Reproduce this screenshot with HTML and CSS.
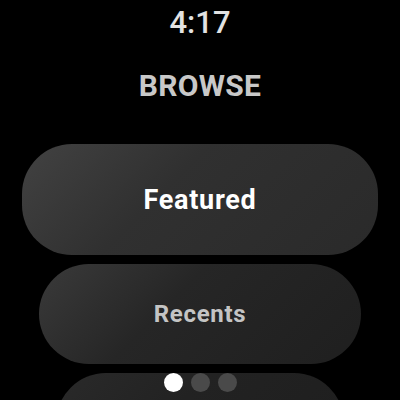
FILE: index.html
```html
<!DOCTYPE html>
<html lang="en">
<head>
    <meta charset="UTF-8">
    <title>Browse</title>
    <meta name="viewport" content="width=device-width, initial-scale=1.0">
    <link rel="stylesheet" href="styles.css">
</head>
<body>
<div class="screen">
    <div class="time">4:17</div>
    <h1 class="title">BROWSE</h1>

    <div class="list">
        <button class="chip chip-1">Featured</button>
        <button class="chip chip-2">Recents</button>
        <!-- next item, scrolled below the edge -->
        <button class="chip chip-3"></button>
    </div>

    <!-- page indicator -->
    <div class="dots">
        <span class="dot active"></span>
        <span class="dot"></span>
        <span class="dot"></span>
    </div>
</div>
</body>
</html>
```

FILE: styles.css
```css
html, body {
    margin: 0;
    background: #000;
}

body {
    font-family: Roboto, "Liberation Sans", sans-serif;
}

.screen {
    position: relative;
    width: 400px;
    height: 400px;
    overflow: hidden;
    display: flex;
    flex-direction: column;
    align-items: center;
}

.time {
    margin-top: 5px;
    font-size: 31px;
    line-height: 36px;
    font-weight: 500;
    color: #e2e2e2;
}

.title {
    margin: 28px 0 0;
    font-size: 30px;
    line-height: 34px;
    font-weight: bold;
    color: #c8c8c8;
    letter-spacing: 0.3px;
}

.list {
    margin-top: 41px;
    display: flex;
    flex-direction: column;
    align-items: center;
    gap: 9px;
}

.chip {
    border: none;
    border-radius: 50px;
    font-family: inherit;
    font-weight: bold;
    padding: 0;
}

.chip-1 {
    width: 356px;
    height: 111px;
    font-size: 27px;
    letter-spacing: 0.7px;
    color: #fff;
    background: linear-gradient(135deg, #424242 0%, #303030 40%, #2a2a2a 100%);
}

.chip-2 {
    width: 322px;
    height: 100px;
    font-size: 24px;
    letter-spacing: 0.7px;
    color: #c4c4c4;
    background: linear-gradient(135deg, #3a3a3a 0%, #262626 40%, #1f1f1f 100%);
}

.chip-3 {
    width: 288px;
    height: 100px;
    background: linear-gradient(135deg, #2a2a2a 0%, #222 40%, #1e1e1e 100%);
}

.dots {
    position: absolute;
    left: 0;
    right: 0;
    top: 373px;
    display: flex;
    justify-content: center;
    gap: 8px;
}

.dot {
    width: 19px;
    height: 19px;
    border-radius: 50%;
    background: #4a4a4a;
}

.dot.active {
    background: #fff;
}
```
